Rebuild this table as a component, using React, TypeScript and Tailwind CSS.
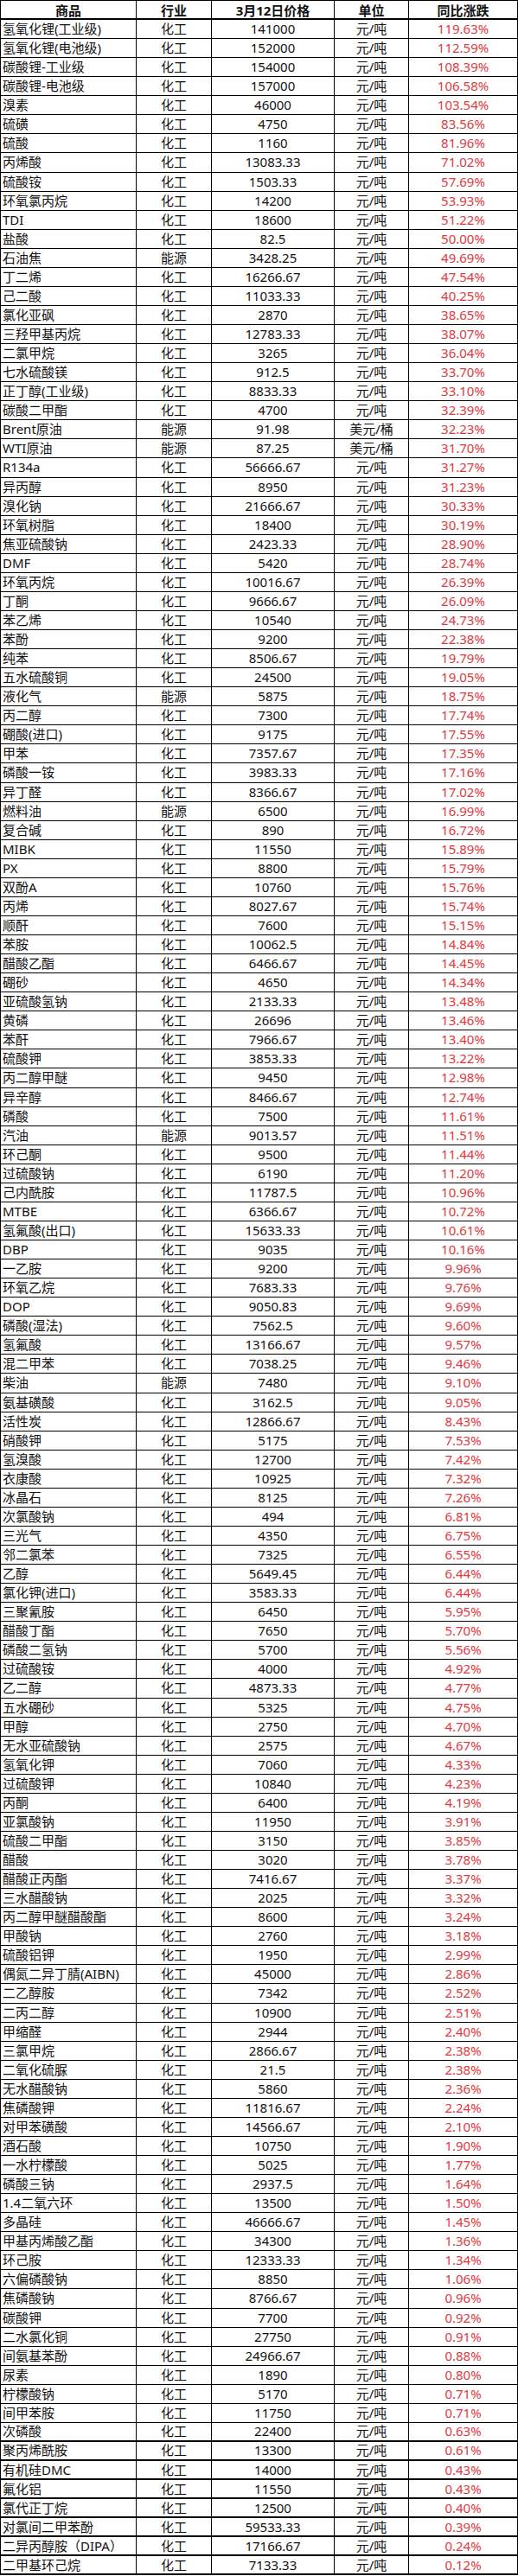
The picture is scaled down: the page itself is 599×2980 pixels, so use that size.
const RAW = `
氢氧化锂(工业级) 化工 141000 元/吨 119.63%
氢氧化锂(电池级) 化工 152000 元/吨 112.59%
碳酸锂-工业级 化工 154000 元/吨 108.39%
碳酸锂-电池级 化工 157000 元/吨 106.58%
溴素 化工 46000 元/吨 103.54%
硫磺 化工 4750 元/吨 83.56%
硫酸 化工 1160 元/吨 81.96%
丙烯酸 化工 13083.33 元/吨 71.02%
硫酸铵 化工 1503.33 元/吨 57.69%
环氧氯丙烷 化工 14200 元/吨 53.93%
TDI 化工 18600 元/吨 51.22%
盐酸 化工 82.5 元/吨 50.00%
石油焦 能源 3428.25 元/吨 49.69%
丁二烯 化工 16266.67 元/吨 47.54%
己二酸 化工 11033.33 元/吨 40.25%
氯化亚砜 化工 2870 元/吨 38.65%
三羟甲基丙烷 化工 12783.33 元/吨 38.07%
二氯甲烷 化工 3265 元/吨 36.04%
七水硫酸镁 化工 912.5 元/吨 33.70%
正丁醇(工业级) 化工 8833.33 元/吨 33.10%
碳酸二甲酯 化工 4700 元/吨 32.39%
Brent原油 能源 91.98 美元/桶 32.23%
WTI原油 能源 87.25 美元/桶 31.70%
R134a 化工 56666.67 元/吨 31.27%
异丙醇 化工 8950 元/吨 31.23%
溴化钠 化工 21666.67 元/吨 30.33%
环氧树脂 化工 18400 元/吨 30.19%
焦亚硫酸钠 化工 2423.33 元/吨 28.90%
DMF 化工 5420 元/吨 28.74%
环氧丙烷 化工 10016.67 元/吨 26.39%
丁酮 化工 9666.67 元/吨 26.09%
苯乙烯 化工 10540 元/吨 24.73%
苯酚 化工 9200 元/吨 22.38%
纯苯 化工 8506.67 元/吨 19.79%
五水硫酸铜 化工 24500 元/吨 19.05%
液化气 能源 5875 元/吨 18.75%
丙二醇 化工 7300 元/吨 17.74%
硼酸(进口) 化工 9175 元/吨 17.55%
甲苯 化工 7357.67 元/吨 17.35%
磷酸一铵 化工 3983.33 元/吨 17.16%
异丁醛 化工 8366.67 元/吨 17.02%
燃料油 能源 6500 元/吨 16.99%
复合碱 化工 890 元/吨 16.72%
MIBK 化工 11550 元/吨 15.89%
PX 化工 8800 元/吨 15.79%
双酚A 化工 10760 元/吨 15.76%
丙烯 化工 8027.67 元/吨 15.74%
顺酐 化工 7600 元/吨 15.15%
苯胺 化工 10062.5 元/吨 14.84%
醋酸乙酯 化工 6466.67 元/吨 14.45%
硼砂 化工 4650 元/吨 14.34%
亚硫酸氢钠 化工 2133.33 元/吨 13.48%
黄磷 化工 26696 元/吨 13.46%
苯酐 化工 7966.67 元/吨 13.40%
硫酸钾 化工 3853.33 元/吨 13.22%
丙二醇甲醚 化工 9450 元/吨 12.98%
异辛醇 化工 8466.67 元/吨 12.74%
磷酸 化工 7500 元/吨 11.61%
汽油 能源 9013.57 元/吨 11.51%
环己酮 化工 9500 元/吨 11.44%
过硫酸钠 化工 6190 元/吨 11.20%
己内酰胺 化工 11787.5 元/吨 10.96%
MTBE 化工 6366.67 元/吨 10.72%
氢氟酸(出口) 化工 15633.33 元/吨 10.61%
DBP 化工 9035 元/吨 10.16%
一乙胺 化工 9200 元/吨 9.96%
环氧乙烷 化工 7683.33 元/吨 9.76%
DOP 化工 9050.83 元/吨 9.69%
磷酸(湿法) 化工 7562.5 元/吨 9.60%
氢氟酸 化工 13166.67 元/吨 9.57%
混二甲苯 化工 7038.25 元/吨 9.46%
柴油 能源 7480 元/吨 9.10%
氨基磺酸 化工 3162.5 元/吨 9.05%
活性炭 化工 12866.67 元/吨 8.43%
硝酸钾 化工 5175 元/吨 7.53%
氢溴酸 化工 12700 元/吨 7.42%
衣康酸 化工 10925 元/吨 7.32%
冰晶石 化工 8125 元/吨 7.26%
次氯酸钠 化工 494 元/吨 6.81%
三光气 化工 4350 元/吨 6.75%
邻二氯苯 化工 7325 元/吨 6.55%
乙醇 化工 5649.45 元/吨 6.44%
氯化钾(进口) 化工 3583.33 元/吨 6.44%
三聚氰胺 化工 6450 元/吨 5.95%
醋酸丁酯 化工 7650 元/吨 5.70%
磷酸二氢钠 化工 5700 元/吨 5.56%
过硫酸铵 化工 4000 元/吨 4.92%
乙二醇 化工 4873.33 元/吨 4.77%
五水硼砂 化工 5325 元/吨 4.75%
甲醇 化工 2750 元/吨 4.70%
无水亚硫酸钠 化工 2575 元/吨 4.67%
氢氧化钾 化工 7060 元/吨 4.33%
过硫酸钾 化工 10840 元/吨 4.23%
丙酮 化工 6400 元/吨 4.19%
亚氯酸钠 化工 11950 元/吨 3.91%
硫酸二甲酯 化工 3150 元/吨 3.85%
醋酸 化工 3020 元/吨 3.78%
醋酸正丙酯 化工 7416.67 元/吨 3.37%
三水醋酸钠 化工 2025 元/吨 3.32%
丙二醇甲醚醋酸酯 化工 8600 元/吨 3.24%
甲酸钠 化工 2760 元/吨 3.18%
硫酸铝钾 化工 1950 元/吨 2.99%
偶氮二异丁腈(AIBN) 化工 45000 元/吨 2.86%
二乙醇胺 化工 7342 元/吨 2.52%
二丙二醇 化工 10900 元/吨 2.51%
甲缩醛 化工 2944 元/吨 2.40%
三氯甲烷 化工 2866.67 元/吨 2.38%
二氧化硫脲 化工 21.5 元/吨 2.38%
无水醋酸钠 化工 5860 元/吨 2.36%
焦磷酸钾 化工 11816.67 元/吨 2.24%
对甲苯磺酸 化工 14566.67 元/吨 2.10%
酒石酸 化工 10750 元/吨 1.90%
一水柠檬酸 化工 5025 元/吨 1.77%
磷酸三钠 化工 2937.5 元/吨 1.64%
1.4二氧六环 化工 13500 元/吨 1.50%
多晶硅 化工 46666.67 元/吨 1.45%
甲基丙烯酸乙酯 化工 34300 元/吨 1.36%
环己胺 化工 12333.33 元/吨 1.34%
六偏磷酸钠 化工 8850 元/吨 1.06%
焦磷酸钠 化工 8766.67 元/吨 0.96%
碳酸钾 化工 7700 元/吨 0.92%
二水氯化铜 化工 27750 元/吨 0.91%
间氨基苯酚 化工 24966.67 元/吨 0.88%
尿素 化工 1890 元/吨 0.80%
柠檬酸钠 化工 5170 元/吨 0.71%
间甲苯胺 化工 11750 元/吨 0.71%
次磷酸 化工 22400 元/吨 0.63%
聚丙烯酰胺 化工 13300 元/吨 0.61%
有机硅DMC 化工 14000 元/吨 0.43%
氟化铝 化工 11550 元/吨 0.43%
氯代正丁烷 化工 12500 元/吨 0.40%
对氯间二甲苯酚 化工 59533.33 元/吨 0.39%
二异丙醇胺（DIPA） 化工 17166.67 元/吨 0.24%
二甲基环己烷 化工 7133.33 元/吨 0.12%
`;

const rows = RAW.trim()
  .split("\n")
  .map((line) => line.trim().split(" "));

// the last few rows in the screenshot have heavier rules
const THICK_FROM = rows.length - 8;

const cols = "grid grid-cols-[157px_87px_142px_86px_126px]";

export default function App() {
  return (
    <div
      className="w-[599px] bg-white text-[15px] text-[#111]"
      style={{ fontFamily: '"Noto Sans", "Noto Sans CJK SC", sans-serif' }}
    >
      <div className="border-l border-black">
        <div className={`${cols} h-[23px] border-t border-b-2 border-black font-bold`}>
          <div className="flex items-center justify-center border-r border-black">商品</div>
          <div className="flex items-center justify-center border-r border-black">行业</div>
          <div className="flex items-center justify-center border-r border-black">3月12日价格</div>
          <div className="flex items-center justify-center border-r border-black">单位</div>
          <div className="flex items-center justify-center border-r border-black">同比涨跌</div>
        </div>
        {rows.map(([name, industry, price, unit, pct], i) => (
          <div
            key={i}
            className={`${cols} h-[22.067px] border-black leading-none ${
              i >= THICK_FROM ? "border-b-2" : "border-b"
            }`}
          >
            <div className="flex items-center pl-[2px] border-r border-black whitespace-nowrap">{name}</div>
            <div className="flex items-center justify-center border-r border-black">{industry}</div>
            <div className="flex items-center justify-center border-r border-black">{price}</div>
            <div className="flex items-center justify-center border-r border-black">{unit}</div>
            <div className="flex items-center justify-center border-r border-black text-[#e0393e]">{pct}</div>
          </div>
        ))}
      </div>
    </div>
  );
}
